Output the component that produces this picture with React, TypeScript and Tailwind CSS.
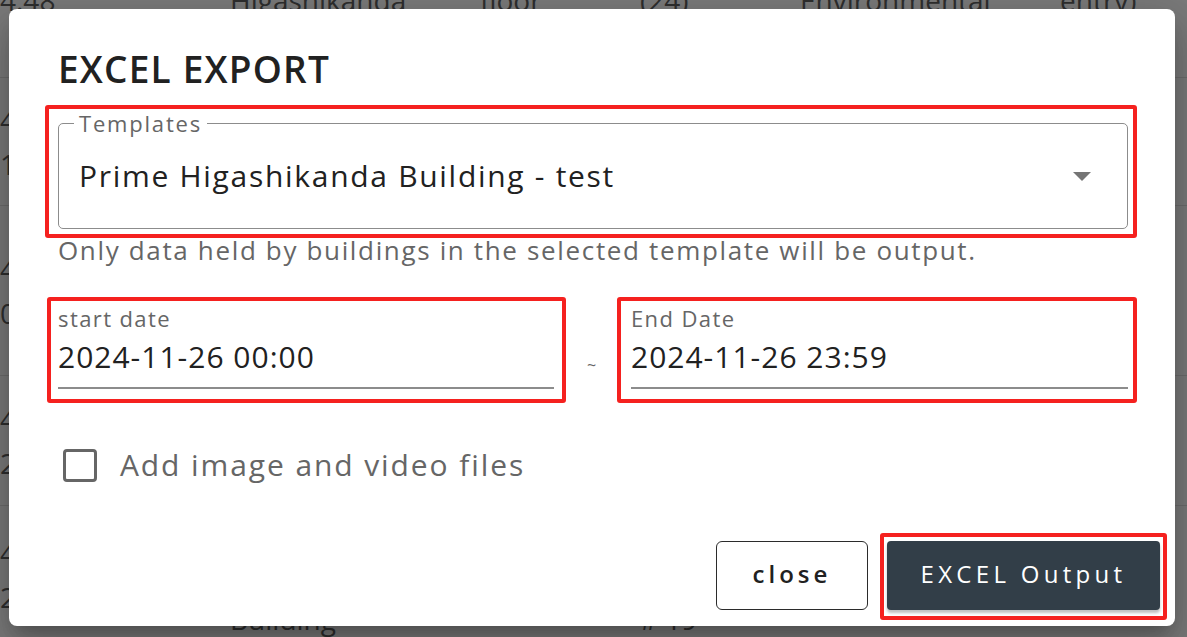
import React, { useState } from 'react';

// table rows that sit behind the modal backdrop
const rows = [
  { h: 'h-[100px] items-start', cells: ['4:48', 'Higashikanda', 'floor', '(24)', 'Environmental', 'entry)'] },
  { h: 'h-[128px] items-center', cells: ['4\n1', '', '', '', '', ''] },
  { h: 'h-[170px] items-center', cells: ['4\n0', '', '', '', '', ''] },
  { h: 'h-[130px] items-center', cells: ['4\n2', '', '', '', '', ''] },
  { h: 'h-[138px] items-center', cells: ['4\n2', 'Prime\nHigashikanda\nBuilding', '', '\n\n# 19', '', ''] },
];

const BackgroundTable = () => (
  <div className="mt-[-22px] text-[28px] leading-[44px] text-[#2e2e2e]">
    {rows.map((row, i) => (
      <div
        key={i}
        className={`grid grid-cols-[230px_250px_160px_160px_260px_1fr] border-b border-[#6c6c6c] ${row.h}`}
      >
        {row.cells.map((c, j) => (
          <div key={j} className="whitespace-pre-line">
            {c}
          </div>
        ))}
      </div>
    ))}
  </div>
);

const DateField = ({ label, value, box, inner }: { label: string; value: string; box: string; inner: string }) => (
  <div className={`h-[106px] shrink-0 rounded-[3px] border-4 border-[#f5211f] ${box}`}>
    <div className={`flex flex-col pt-[4px] ${inner}`}>
      <span className="text-[22px] leading-[26px] tracking-[1.4px] text-[#666]">{label}</span>
      <span className="mt-[8px] text-[30px] leading-[36px] tracking-[1px] text-[#212121]">{value}</span>
      <div className="mt-[12px] h-[2px] bg-[#8c8c8c]" />
    </div>
  </div>
);

export default function App() {
  const [withMedia, setWithMedia] = useState(false);

  return (
    <div className="relative h-[637px] w-[1187px] overflow-hidden bg-[#7a7a7a] font-['Open_Sans','Liberation_Sans',sans-serif]">
      <BackgroundTable />

      {/* export dialog */}
      <div className="absolute left-[9px] top-[9px] flex h-[617px] w-[1166px] flex-col rounded-[8px] bg-white pl-[49px] pr-[47px] pt-[38px] shadow-[0_11px_15px_-7px_rgba(0,0,0,0.2),0_24px_38px_3px_rgba(0,0,0,0.14),0_9px_46px_8px_rgba(0,0,0,0.12)]">
        <h2 className="text-[37px] font-semibold leading-[44px] tracking-[1.2px] text-[#212121]">EXCEL EXPORT</h2>

        {/* template select */}
        <div className="mt-[14px] ml-[-13px] h-[133px] w-[1092px] rounded-[3px] border-4 border-[#f5211f] pl-[9px] pr-[5px] pt-[1px]">
          <fieldset className="rounded-[5px] border-[1.5px] border-[#8c8c8c] px-[20px]">
            <legend className="ml-[-5px] px-[5px] text-[22px] leading-[26px] tracking-[1.8px] text-[#666]">Templates</legend>
            <div className="flex h-[92px] items-center justify-between pb-[12px] pr-[16px]">
              <span className="text-[30px] leading-[36px] tracking-[1.7px] text-[#212121]">
                Prime Higashikanda Building - test
              </span>
              <svg width="18" height="9" viewBox="0 0 18 9">
                <path d="M0 0h18L9 9z" fill="#757575" />
              </svg>
            </div>
          </fieldset>
        </div>
        <p className="mt-[-3px] text-[26px] leading-[30px] tracking-[1.65px] text-[#666]">
          Only data held by buildings in the selected template will be output.
        </p>

        {/* period */}
        <div className="mt-[32px] ml-[-11px] mr-[-9px] flex">
          <DateField label="start date" value="2024-11-26 00:00" box="w-[519px]" inner="pl-[7px] pr-[8px]" />
          <div className="flex w-[51px] shrink-0 items-center justify-center pt-[30px] text-[16px] text-[#666]">~</div>
          <DateField label="End Date" value="2024-11-26 23:59" box="w-[520px]" inner="pl-[10px] pr-[5px]" />
        </div>

        {/* attachments */}
        <label className="mt-[44px] ml-[5px] flex cursor-pointer items-center gap-[23px]">
          <input
            type="checkbox"
            checked={withMedia}
            onChange={(e) => setWithMedia(e.target.checked)}
            className="sr-only"
          />
          <span className="h-[33px] w-[34px] rounded-[4px] border-[3px] border-[#666]" />
          <span className="text-[30px] leading-[36px] tracking-[1.9px] text-[#666]">Add image and video files</span>
        </label>

        {/* actions */}
        <div className="mt-[50px] mr-[-39px] flex items-start justify-end gap-[12px]">
          <button className="mt-[8px] flex h-[69px] w-[152px] items-center justify-center rounded-[6px] border-[1.5px] border-[#2b2b2b] pb-[4px] text-[24px] font-semibold tracking-[4px] text-[#212121]">
            close
          </button>
          <div className="h-[87px] w-[287px] rounded-[3px] border-4 border-[#f5211f] px-[3px] pt-[4px]">
            <button className="flex h-[69px] w-full items-center justify-center rounded-[4px] bg-[#323e48] pb-[4px] text-[24px] font-medium tracking-[4.3px] text-white shadow-[0_3px_3px_rgba(0,0,0,0.25)]">
              EXCEL Output
            </button>
          </div>
        </div>
      </div>
    </div>
  );
}
